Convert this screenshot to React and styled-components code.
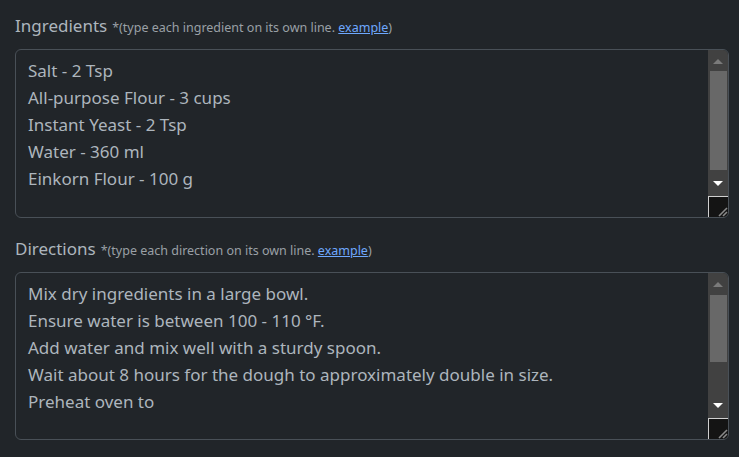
import React from 'react'
import styled, { createGlobalStyle } from 'styled-components'

const GlobalStyle = createGlobalStyle`
  body {
    margin: 0;
    background-color: #212529;
    font-family: 'Noto Sans', 'Open Sans', sans-serif;
  }
`

const Page = styled.div`
  display: flex;
  flex-direction: column;
  gap: 19px;
  padding: 14px 10px 0 15px;
`

const Field = styled.div`
  display: flex;
  flex-direction: column;
  gap: 11px;
`

const Label = styled.div`
  display: flex;
  align-items: baseline;
  gap: 5px;
  height: 24px;
  line-height: 24px;
  font-size: 17px;
  color: #adb5bd;
`

const Hint = styled.span`
  font-size: 12.5px;
  color: #9aa0a6;
`

const Link = styled.a`
  color: #6ea8fe;
  text-decoration: underline;
`

const Box = styled.div`
  display: flex;
  box-sizing: border-box;
  height: ${p => p.$height}px;
  border: 1px solid #495057;
  border-radius: 6px;
  background-color: #212529;
  overflow: hidden;
`

const Lines = styled.div`
  flex: 1;
  padding: 7px 12px;
  font-size: 17px;
  line-height: 27px;
  color: #adb5bd;
`

const Line = styled.div`
  white-space: nowrap;
`

const Scrollbar = styled.div`
  width: 20px;
  display: flex;
  flex-direction: column;
  background-color: #414141;
`

const ArrowButton = styled.div`
  height: ${p => p.$height}px;
  display: flex;
  align-items: center;
  justify-content: center;
`

const Track = styled.div`
  flex: 1;
  display: flex;
  flex-direction: column;
  padding: 0 1px 0 2px;
`

const Thumb = styled.div`
  height: ${p => p.$height}px;
  margin-top: ${p => p.$offset}px;
  background-color: #686868;
`

const Resizer = styled.div`
  height: 21px;
  box-sizing: border-box;
  border-left: 1px solid #d0d0d0;
  border-top: 1px solid #d0d0d0;
  background-color: #141414;
  display: flex;
  align-items: flex-end;
  justify-content: flex-end;
`

const Triangle = ({ up, color }) => (
  <svg width="10" height="6" viewBox="0 0 10 6">
    <path d={up ? 'M0 6 L5 1 L10 6 Z' : 'M0 0 L10 0 L5 5 Z'} fill={color} />
  </svg>
)

const Grip = () => (
  <svg width="10" height="10" viewBox="0 0 10 10">
    <path d="M1 9 L9 1 M5 9 L9 5" stroke="#8a8a8a" strokeWidth="1.6" />
  </svg>
)

const TextArea = ({ lines, height, thumb, offset }) => (
  <Box $height={height}>
    <Lines>
      {lines.map((line, i) => <Line key={i}>{line}</Line>)}
    </Lines>
    <Scrollbar>
      <ArrowButton $height={21}><Triangle up color="#7a7a7a" /></ArrowButton>
      <Track>
        <Thumb $height={thumb} $offset={offset} />
      </Track>
      <ArrowButton $height={24}><Triangle color="#ffffff" /></ArrowButton>
      <Resizer><Grip /></Resizer>
    </Scrollbar>
  </Box>
)

const ingredients = [
  'Salt - 2 Tsp',
  'All-purpose Flour - 3 cups',
  'Instant Yeast - 2 Tsp',
  'Water - 360 ml',
  'Einkorn Flour - 100 g',
]

const directions = [
  'Mix dry ingredients in a large bowl.',
  'Ensure water is between 100 - 110 °F.',
  'Add water and mix well with a sturdy spoon.',
  'Wait about 8 hours for the dough to approximately double in size.',
  'Preheat oven to',
]

const App = () => {
  return (
    <>
      <GlobalStyle />
      <Page>
        <Field>
          <Label>
            Ingredients
            <Hint>*(type each ingredient on its own line. <Link href="#">example</Link>)</Hint>
          </Label>
          <TextArea lines={ingredients} height={169} thumb={99} offset={0} />
        </Field>
        <Field>
          <Label>
            Directions
            <Hint>*(type each direction on its own line. <Link href="#">example</Link>)</Hint>
          </Label>
          <TextArea lines={directions} height={168} thumb={67} offset={1} />
        </Field>
      </Page>
    </>
  )
}

export default App
